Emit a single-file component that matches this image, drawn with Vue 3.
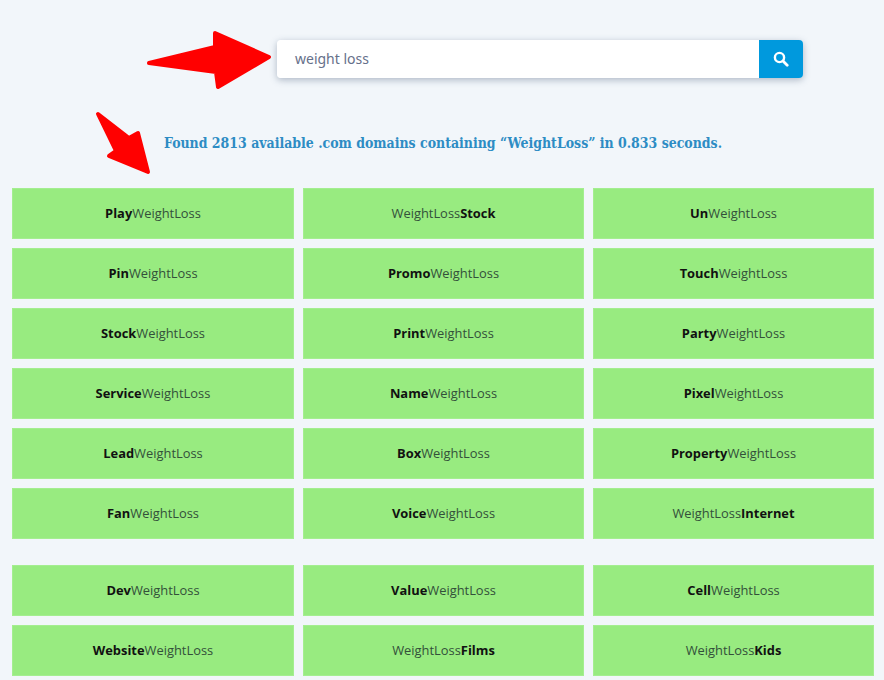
<script setup>
const groupA = [
  ['Play', 'WeightLoss', 0], ['WeightLoss', 'Stock', 1], ['Un', 'WeightLoss', 0],
  ['Pin', 'WeightLoss', 0], ['Promo', 'WeightLoss', 0], ['Touch', 'WeightLoss', 0],
  ['Stock', 'WeightLoss', 0], ['Print', 'WeightLoss', 0], ['Party', 'WeightLoss', 0],
  ['Service', 'WeightLoss', 0], ['Name', 'WeightLoss', 0], ['Pixel', 'WeightLoss', 0],
  ['Lead', 'WeightLoss', 0], ['Box', 'WeightLoss', 0], ['Property', 'WeightLoss', 0],
  ['Fan', 'WeightLoss', 0], ['Voice', 'WeightLoss', 0], ['WeightLoss', 'Internet', 1],
]
const groupB = [
  ['Dev', 'WeightLoss', 0], ['Value', 'WeightLoss', 0], ['Cell', 'WeightLoss', 0],
  ['Website', 'WeightLoss', 0], ['WeightLoss', 'Films', 1], ['WeightLoss', 'Kids', 1],
]
const groups = [groupA, groupB]
</script>

<template>
  <div class="page">
    <svg class="arrow" width="884" height="190" viewBox="0 0 884 190" aria-hidden="true">
      <path fill="#ff0000" stroke="#ff0000" stroke-width="4" stroke-linejoin="round" d="M149 63 L215 47 L215 33 L269 57 L218 87 L216 72 Z" />
      <path fill="#ff0000" stroke="#ff0000" stroke-width="4" stroke-linejoin="round" d="M98 114 L129 138 L138 133 L148 172 L109 156 L116 151 Z" />
    </svg>
    <div class="search">
      <div class="field">weight loss</div>
      <button class="go" type="button" aria-label="Search">
        <svg width="16" height="16" viewBox="0 0 16 16" fill="none" stroke="#fff">
          <circle cx="6.5" cy="6.5" r="4.6" stroke-width="2.4" />
          <path d="M10 10 L14.2 14.2" stroke-width="2.8" stroke-linecap="round" />
        </svg>
      </button>
    </div>
    <h1 class="found">Found 2813 available .com domains containing “WeightLoss” in 0.833 seconds.</h1>
    <div class="groups">
      <div v-for="(g, i) in groups" :key="i" class="grid">
        <div v-for="c in g" :key="c[0] + c[1]" class="cell">
          <template v-if="c[2]"><span>{{ c[0] }}</span><b>{{ c[1] }}</b></template>
          <template v-else><b>{{ c[0] }}</b><span>{{ c[1] }}</span></template>
        </div>
      </div>
    </div>
  </div>
</template>

<style>
html, body { margin: 0; background: #f2f6fa; }
</style>

<style scoped>
.page {
  position: relative;
  width: 884px;
  height: 680px;
  overflow: hidden;
  background: #f2f6fa;
  padding-top: 40px;
  box-sizing: border-box;
}
.arrow { position: absolute; left: 0; top: 0; }
.search {
  position: relative;
  display: flex;
  width: 526px;
  height: 38px;
  margin-left: 277px;
  border-radius: 4px;
  overflow: hidden;
  box-shadow: 0 2px 7px rgba(70, 90, 120, 0.4);
}
.field {
  flex: 1;
  background: #fff;
  padding-left: 18px;
  font: 14px/38px "Noto Sans", sans-serif;
  color: #66708a;
}
.go {
  width: 44px;
  border: 0;
  padding: 0;
  background: #0099dd;
  display: flex;
  align-items: center;
  justify-content: center;
}
.found {
  margin: 56px 0 0 2px;
  height: 54px;
  text-align: center;
  font: bold 13.95px/19px "DejaVu Serif Condensed", "DejaVu Serif", serif;
  color: #2d8cc4;
}
.groups { display: flex; flex-direction: column; gap: 26px; padding-left: 12px; }
.grid { display: grid; grid-template-columns: 282px 281px 281px; gap: 9px; }
.cell {
  height: 51px;
  box-sizing: border-box;
  border: 1px solid #a4ee90;
  background: #98eb80;
  display: flex;
  align-items: center;
  justify-content: center;
  padding-bottom: 2px;
  font: 12.9px "Open Sans", sans-serif;
  color: #33503a;
}
.cell b { color: #111; font-weight: 700; }
</style>
